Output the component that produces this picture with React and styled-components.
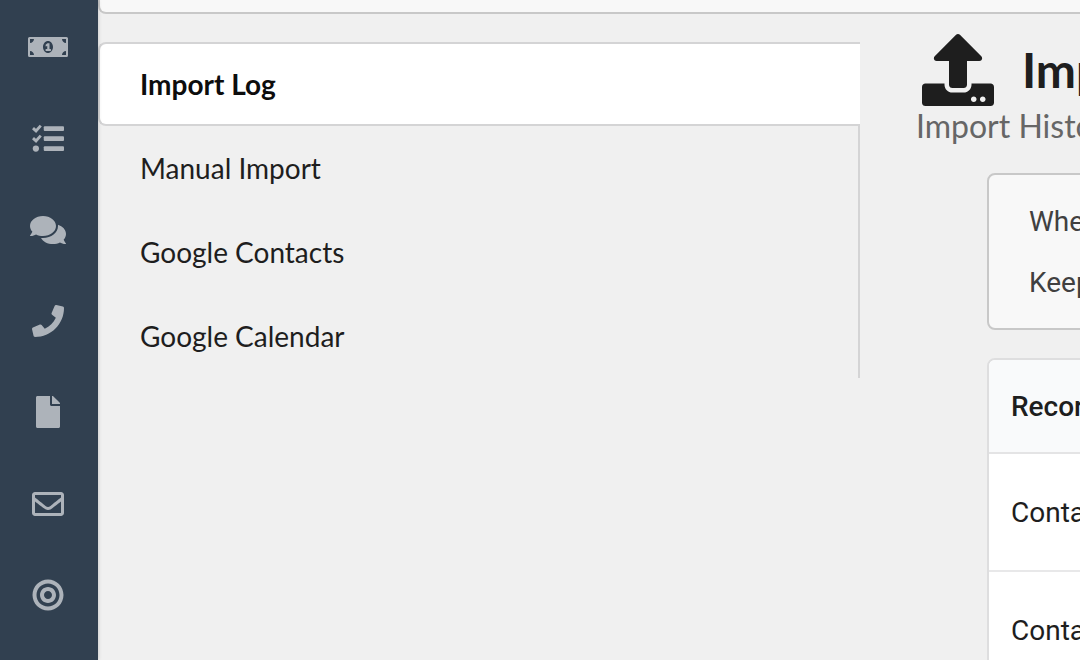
import React from 'react'
import styled, { createGlobalStyle } from 'styled-components'
import {
  FaComments,
  FaPhone,
  FaFile,
  FaRegEnvelope,
  FaBullseye,
  FaUpload
} from 'react-icons/fa'

const GlobalStyle = createGlobalStyle`
  * {
    box-sizing: border-box;
  }

  body {
    margin: 0;
    background-color: #f0f0f0;
    color: #1e1e1e;
    font-family: Lato, 'Liberation Sans', sans-serif;
    font-size: 28px;
    overflow: hidden;
  }
`

const Page = styled.div`
  display: flex;
  height: 100vh;
`

const Sidebar = styled.nav`
  z-index: 1;
  flex: 0 0 98px;
  display: flex;
  flex-direction: column;
  align-items: center;
  justify-content: space-between;
  padding: 31px 3px 49px 0;
  background-color: #314050;
  box-shadow: 0 0 4px rgba(0, 0, 0, 0.2);
`

const SidebarLink = styled.a`
  display: flex;
  align-items: center;
  height: 32px;
  color: #adb3ba;
`

const Content = styled.div`
  flex: 1;
  min-width: 0;
  overflow: hidden;
`

const TopSegment = styled.div`
  height: 14px;
  margin-right: -8px;
  background-color: #f8f8f8;
  border: 2px solid #c8c8c8;
  border-top: 0;
  border-radius: 0 0 8px 8px;
`

const Columns = styled.div`
  display: flex;
  align-items: flex-start;
  padding-top: 20px;
`

const Menu = styled.nav`
  flex: 1;
  display: flex;
  flex-direction: column;
  margin-top: 8px;
`

const MenuItem = styled.a`
  height: 84px;
  padding: 0 40px;
  border: 2px solid ${props => (props.$active ? '#d4d4d5' : 'transparent')};
  border-right: ${props => (props.$active ? '0' : '2px solid #d4d4d5')};
  border-top-width: ${props => (props.$active ? '2px' : '0')};
  border-bottom-width: ${props => (props.$active ? '2px' : '0')};
  border-radius: ${props => (props.$active ? '8px 0 0 8px' : '0')};
  background-color: ${props => (props.$active ? '#fff' : 'transparent')};
  color: ${props => (props.$active ? '#0d0d0d' : '#1e1e1e')};
  font-weight: ${props => (props.$active ? 700 : 400)};
  line-height: ${props => (props.$active ? '80px' : '84px')};
  text-decoration: none;
`

const Main = styled.main`
  flex: 0 0 220px;
  padding-left: 56px;
  overflow: hidden;
  white-space: nowrap;
`

const Title = styled.h1`
  display: flex;
  align-items: center;
  gap: 28px;
  margin: 0;
  padding-left: 6px;
  font-size: 48px;
  line-height: 72px;

  svg {
    flex: none;
    font-size: 72px;
  }
`

const Subtitle = styled.p`
  margin: 0 0 27px;
  color: #666;
  font-size: 32px;
  line-height: 40px;
`

const Details = styled.div`
  margin-left: 71px;
  font-family: Roboto, 'Liberation Sans', sans-serif;
`

const Note = styled.div`
  display: flex;
  flex-direction: column;
  gap: 21px;
  margin: 0 -8px 28px 0;
  padding: 27px 40px 25px;
  background-color: #f8f8f8;
  border: 2px solid #c8c8c8;
  border-radius: 8px;
  color: #404040;

  p {
    margin: 0;
    line-height: 40px;
  }
`

const TableFrame = styled.div`
  margin-right: -8px;
  background-color: #fff;
  border: 2px solid #dededf;
  border-radius: 8px;
  overflow: hidden;
`

const Table = styled.table`
  width: 100%;
  border-collapse: separate;
  border-spacing: 0;
`

const HeadCell = styled.th`
  height: 94px;
  padding: 0 22px;
  background-color: #f9fafb;
  border-bottom: 2px solid #e4e4e5;
  font-weight: 500;
  text-align: left;
`

const Cell = styled.td`
  height: 118px;
  padding: 0 22px;
  border-bottom: 2px solid #e8e8e9;
`

const MoneyIcon = () => (
  <svg width="40" height="32" viewBox="0 0 640 512" fill="currentColor">
    <path
      fillRule="evenodd"
      d="M24 96h592a24 24 0 0 1 24 24v272a24 24 0 0 1-24 24H24a24 24 0 0 1-24-24V120a24 24 0 0 1 24-24zM32 128v64c35 0 64-29 64-64zM544 128c0 35 29 64 64 64v-64zM32 384h64c0-35-29-64-64-64zM608 384v-64c-35 0-64 29-64 64zM320 160c-44 0-80 43-80 96s36 96 80 96 80-43 80-96-36-96-80-96zM311 196h33v92h22v30h-84v-30h26v-48l-26 8v-30z"
    />
  </svg>
)

const TasksIcon = () => (
  <svg width="32" height="32" viewBox="0 0 512 512" fill="currentColor">
    <rect x="188" y="66" width="324" height="76" rx="16" />
    <rect x="188" y="226" width="324" height="76" rx="16" />
    <rect x="188" y="386" width="324" height="76" rx="16" />
    <circle cx="62" cy="424" r="50" />
    <path
      d="M16 98l48 44 76-84M16 258l48 44 76-84"
      fill="none"
      stroke="currentColor"
      strokeWidth="46"
    />
  </svg>
)

const links = [
  { label: 'Deals', icon: <MoneyIcon /> },
  { label: 'Tasks', icon: <TasksIcon /> },
  { label: 'Messages', icon: <FaComments size={36} /> },
  { label: 'Calls', icon: <FaPhone size={32} /> },
  { label: 'Documents', icon: <FaFile size={32} /> },
  { label: 'Mail', icon: <FaRegEnvelope size={32} /> },
  { label: 'Goals', icon: <FaBullseye size={32} /> }
]

const menuItems = [
  'Import Log',
  'Manual Import',
  'Google Contacts',
  'Google Calendar'
]

const rows = ['Contact', 'Contact']

const App = () => (
  <Page>
    <GlobalStyle />
    <Sidebar>
      {links.map(link => (
        <SidebarLink key={link.label} href="#" aria-label={link.label}>
          {link.icon}
        </SidebarLink>
      ))}
    </Sidebar>
    <Content>
      <TopSegment />
      <Columns>
        <Menu>
          {menuItems.map((item, i) => (
            <MenuItem key={item} href="#" $active={i === 0}>
              {item}
            </MenuItem>
          ))}
        </Menu>
        <Main>
          <Title>
            <FaUpload />
            Import
          </Title>
          <Subtitle>Import History</Subtitle>
          <Details>
            <Note>
              <p>When</p>
              <p>Keep</p>
            </Note>
            <TableFrame>
              <Table>
                <thead>
                  <tr>
                    <HeadCell>Record</HeadCell>
                  </tr>
                </thead>
                <tbody>
                  {rows.map((row, i) => (
                    <tr key={i}>
                      <Cell>{row}</Cell>
                    </tr>
                  ))}
                </tbody>
              </Table>
            </TableFrame>
          </Details>
        </Main>
      </Columns>
    </Content>
  </Page>
)

export default App
